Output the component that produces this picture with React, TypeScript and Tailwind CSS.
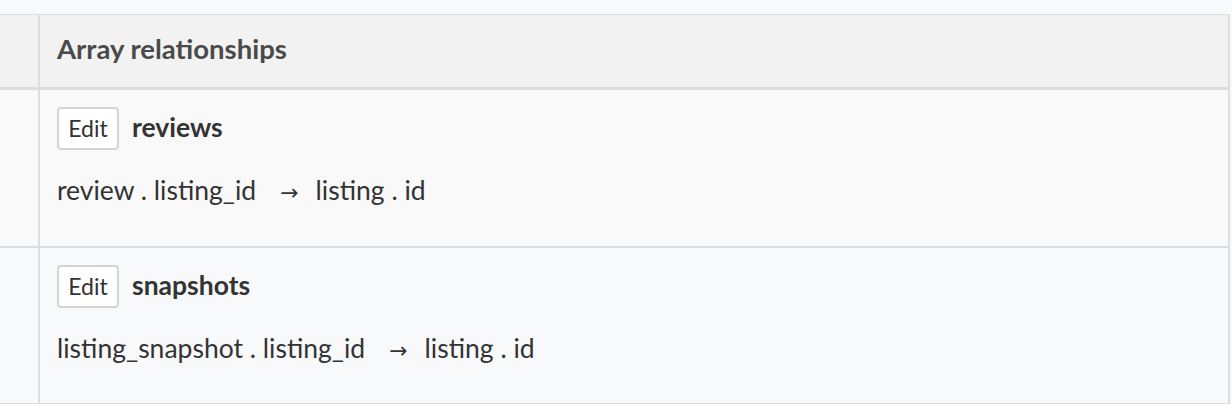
const font = { fontFamily: 'Lato, "Open Sans", sans-serif' };

type Rel = { name: string; from: string; col: string; to: string; toCol: string; bg: string; last?: boolean };

const rels: Rel[] = [
  { name: 'reviews', from: 'review', col: 'listing_id', to: 'listing', toCol: 'id', bg: 'bg-[#f9f9f9]' },
  { name: 'snapshots', from: 'listing_snapshot', col: 'listing_id', to: 'listing', toCol: 'id', bg: 'bg-[#f8f9fb]', last: true },
];

function RelRow({ rel }: { rel: Rel }) {
  return (
    <div className={`flex border-[#dddddd] ${rel.last ? 'border-b' : 'border-b-2'} ${rel.bg}`}>
      <div className="w-[40px] shrink-0 border-r-2 border-[#dddddd]" />
      <div className={`flex-1 pl-[17px] pt-[17px] text-[#333333] ${rel.last ? 'pb-[39px]' : 'pb-[40px]'}`}>
        <div className="flex h-[43px] items-baseline gap-[13px]">
          <button className="h-[43px] w-[62px] rounded-[4px] border-2 border-[#d4d4d4] bg-white text-[23px] text-[#333333]">
            Edit
          </button>
          <span className="text-[26.5px] font-bold leading-none">{rel.name}</span>
        </div>
        <div className="mt-[24px] h-[32px] text-[26.5px] leading-[32px]">
          {rel.from} . {rel.col}
          <span
            className="ml-[24px] mr-[17px] inline-block text-[22px] leading-none"
            style={{ fontFamily: '"DejaVu Sans", sans-serif' }}
          >
            →
          </span>
          {rel.to} . {rel.toCol}
        </div>
      </div>
    </div>
  );
}

export default function App() {
  return (
    <div className="min-h-[404px] w-[1232px] bg-[#f8f9fb] pt-[14px]" style={font}>
      <div className="mr-[2px] border-t border-r-2 border-[#dddddd]">
        <div className="flex border-b-[3px] border-[#dddddd] bg-[#f2f2f2]">
          <div className="w-[40px] shrink-0 border-r-2 border-[#dddddd]" />
          <div className="flex h-[72px] flex-1 items-center pb-[4px] pl-[17px] text-[27.5px] font-bold text-[#4a4a4a]">
            Array relationships
          </div>
        </div>
        {rels.map((r) => (
          <RelRow key={r.name} rel={r} />
        ))}
      </div>
    </div>
  );
}
